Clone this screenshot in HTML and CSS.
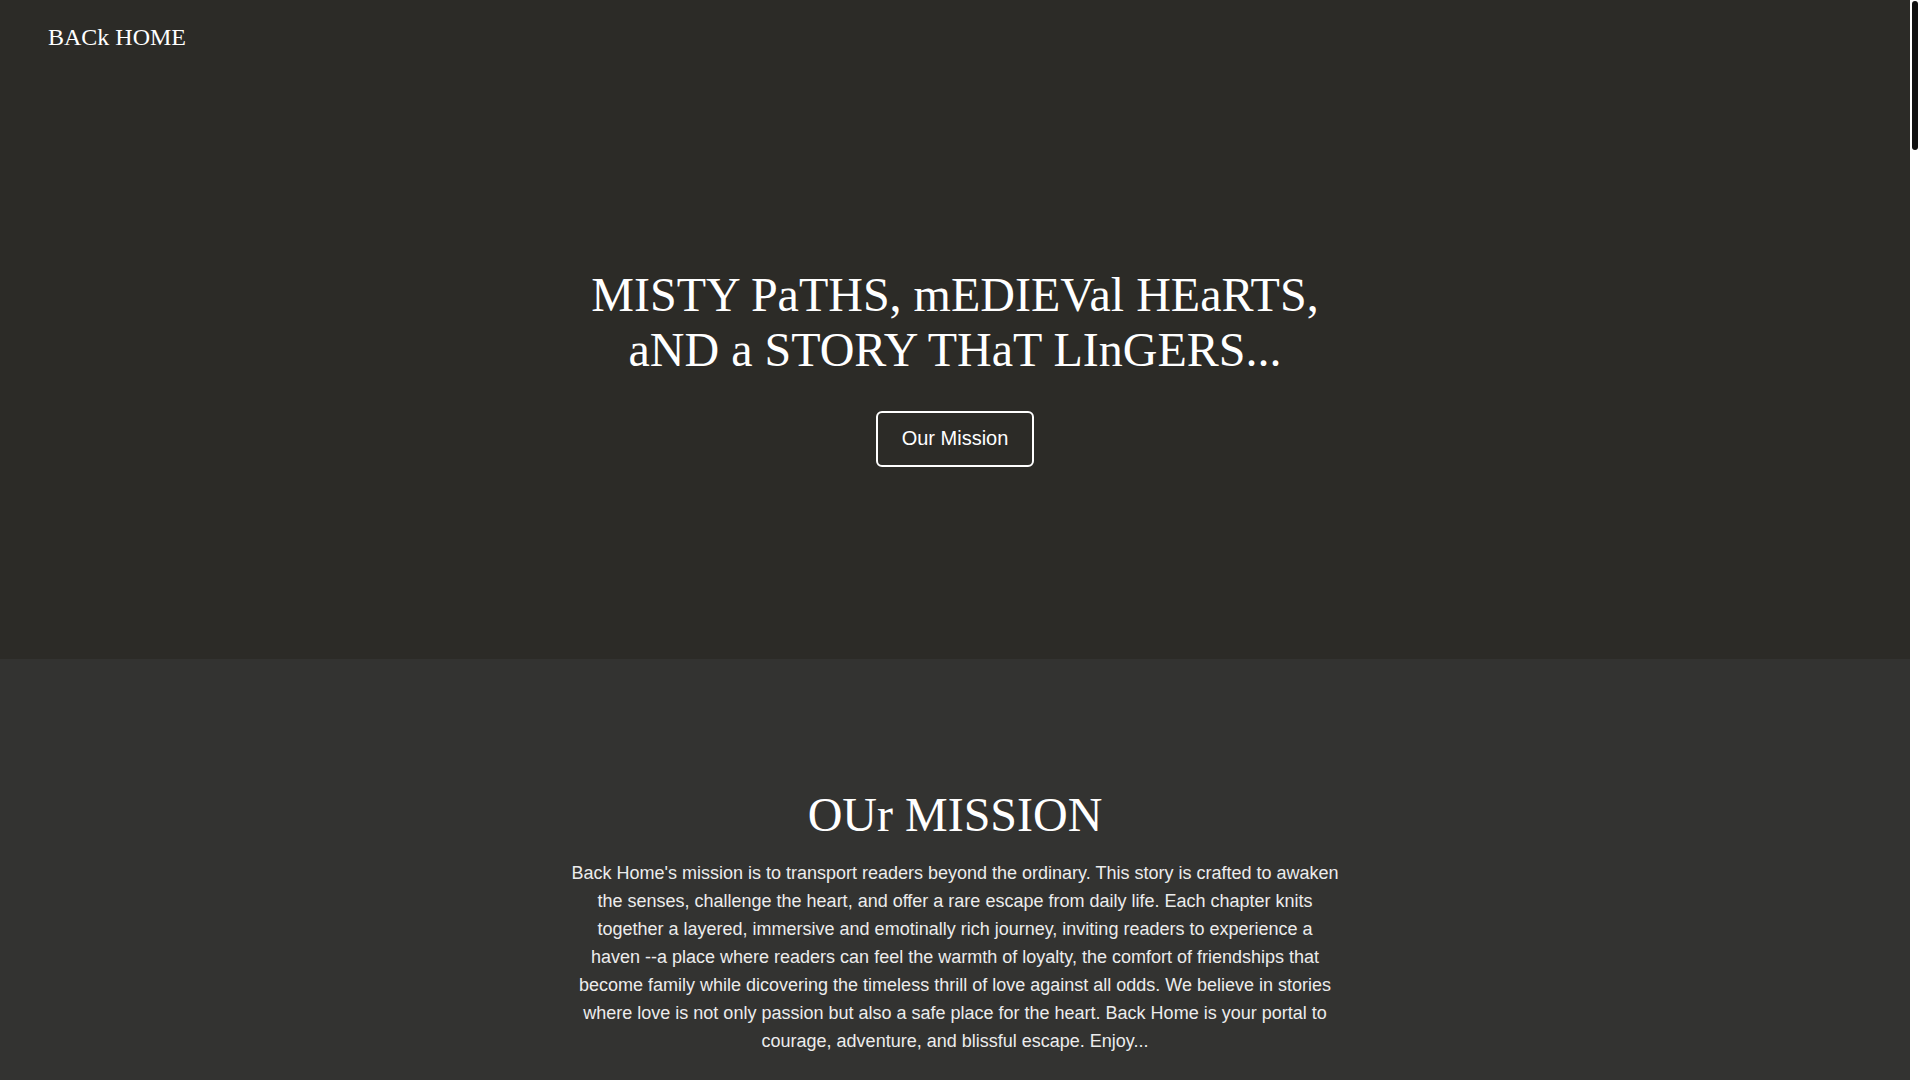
FILE: index.html
```html
<!DOCTYPE html>
<html lang="en">
<head>
<meta charset="utf-8">
<title>Back Home</title>
<link rel="stylesheet" href="styles.css">
</head>
<body>
<div class="page">
  <main class="page-content">
    <section class="hero">
      <header class="site-header">
        <a class="logo" href="#">BACk HOME</a>
      </header>
      <div class="hero-content">
        <h1 class="hero-title">MISTY PaTHS, mEDIEVal HEaRTS, aND a STORY THaT LInGERS...</h1>
        <a class="btn-outline" href="#mission">Our Mission</a>
      </div>
    </section>
    <section class="mission" id="mission">
      <div class="mission-inner">
        <h2 class="mission-title">OUr MISSION</h2>
        <p class="mission-text">Back Home's mission is to transport readers beyond the ordinary. This story is crafted to awaken the senses, challenge the heart, and offer a rare escape from daily life. Each chapter knits together a layered, immersive and emotinally rich journey, inviting readers to experience a haven --a place where readers can feel the warmth of loyalty, the comfort of friendships that become family while dicovering the timeless thrill of love against all odds. We believe in stories where love is not only passion but also a safe place for the heart. Back Home is your portal to courage, adventure, and blissful escape. Enjoy...</p>
      </div>
    </section>
  </main>
  <aside class="scrollbar" aria-hidden="true">
    <div class="scrollbar-thumb"></div>
  </aside>
</div>
</body>
</html>
```

FILE: styles.css
```css
html, body {
  margin: 0;
  padding: 0;
}

body {
  background: #333331;
  font-family: "Liberation Sans", Arial, sans-serif;
  color: #ffffff;
}

.page {
  display: flex;
  align-items: flex-start;
}

.page-content {
  flex: 1;
  min-width: 0;
  min-height: 7850px;
  display: flex;
  flex-direction: column;
}

.scrollbar {
  position: sticky;
  top: 0;
  width: 10px;
  height: 100vh;
  background: #ffffff;
  flex-shrink: 0;
  padding: 1px 2px;
  box-sizing: border-box;
}

.scrollbar-thumb {
  height: 149px;
  background: #111111;
  border-radius: 3px;
}

.hero {
  background: #2c2b27;
  height: 659px;
  display: flex;
  flex-direction: column;
}

.site-header {
  padding: 23px 48px;
  height: 28px;
  display: flex;
  align-items: center;
}

.logo {
  font-family: "Liberation Serif", "Times New Roman", serif;
  font-size: 24px;
  color: #ffffff;
  text-decoration: none;
  line-height: 28px;
}

.hero-content {
  flex: 1;
  display: flex;
  flex-direction: column;
  align-items: center;
  justify-content: center;
  text-align: center;
}

.hero-title {
  font-family: "Liberation Serif", "Times New Roman", serif;
  font-weight: 400;
  font-size: 48px;
  line-height: 55px;
  max-width: 768px;
  margin: 0 0 34px;
  color: #ffffff;
}

.btn-outline {
  display: inline-flex;
  align-items: center;
  justify-content: center;
  box-sizing: border-box;
  height: 56px;
  padding: 0 24px;
  border: 2px solid #ffffff;
  border-radius: 6px;
  font-size: 20px;
  color: #ffffff;
  text-decoration: none;
}

.mission {
  background: #333331;
  flex: 1;
  padding-top: 128px;
}

.mission-inner {
  max-width: 768px;
  margin: 0 auto;
  text-align: center;
}

.mission-title {
  font-family: "Liberation Serif", "Times New Roman", serif;
  font-weight: 400;
  font-size: 48px;
  line-height: 55px;
  margin: 0 0 17px;
  color: #ffffff;
}

.mission-text {
  font-size: 18px;
  line-height: 28px;
  margin: 0;
  color: #ececec;
}
```
